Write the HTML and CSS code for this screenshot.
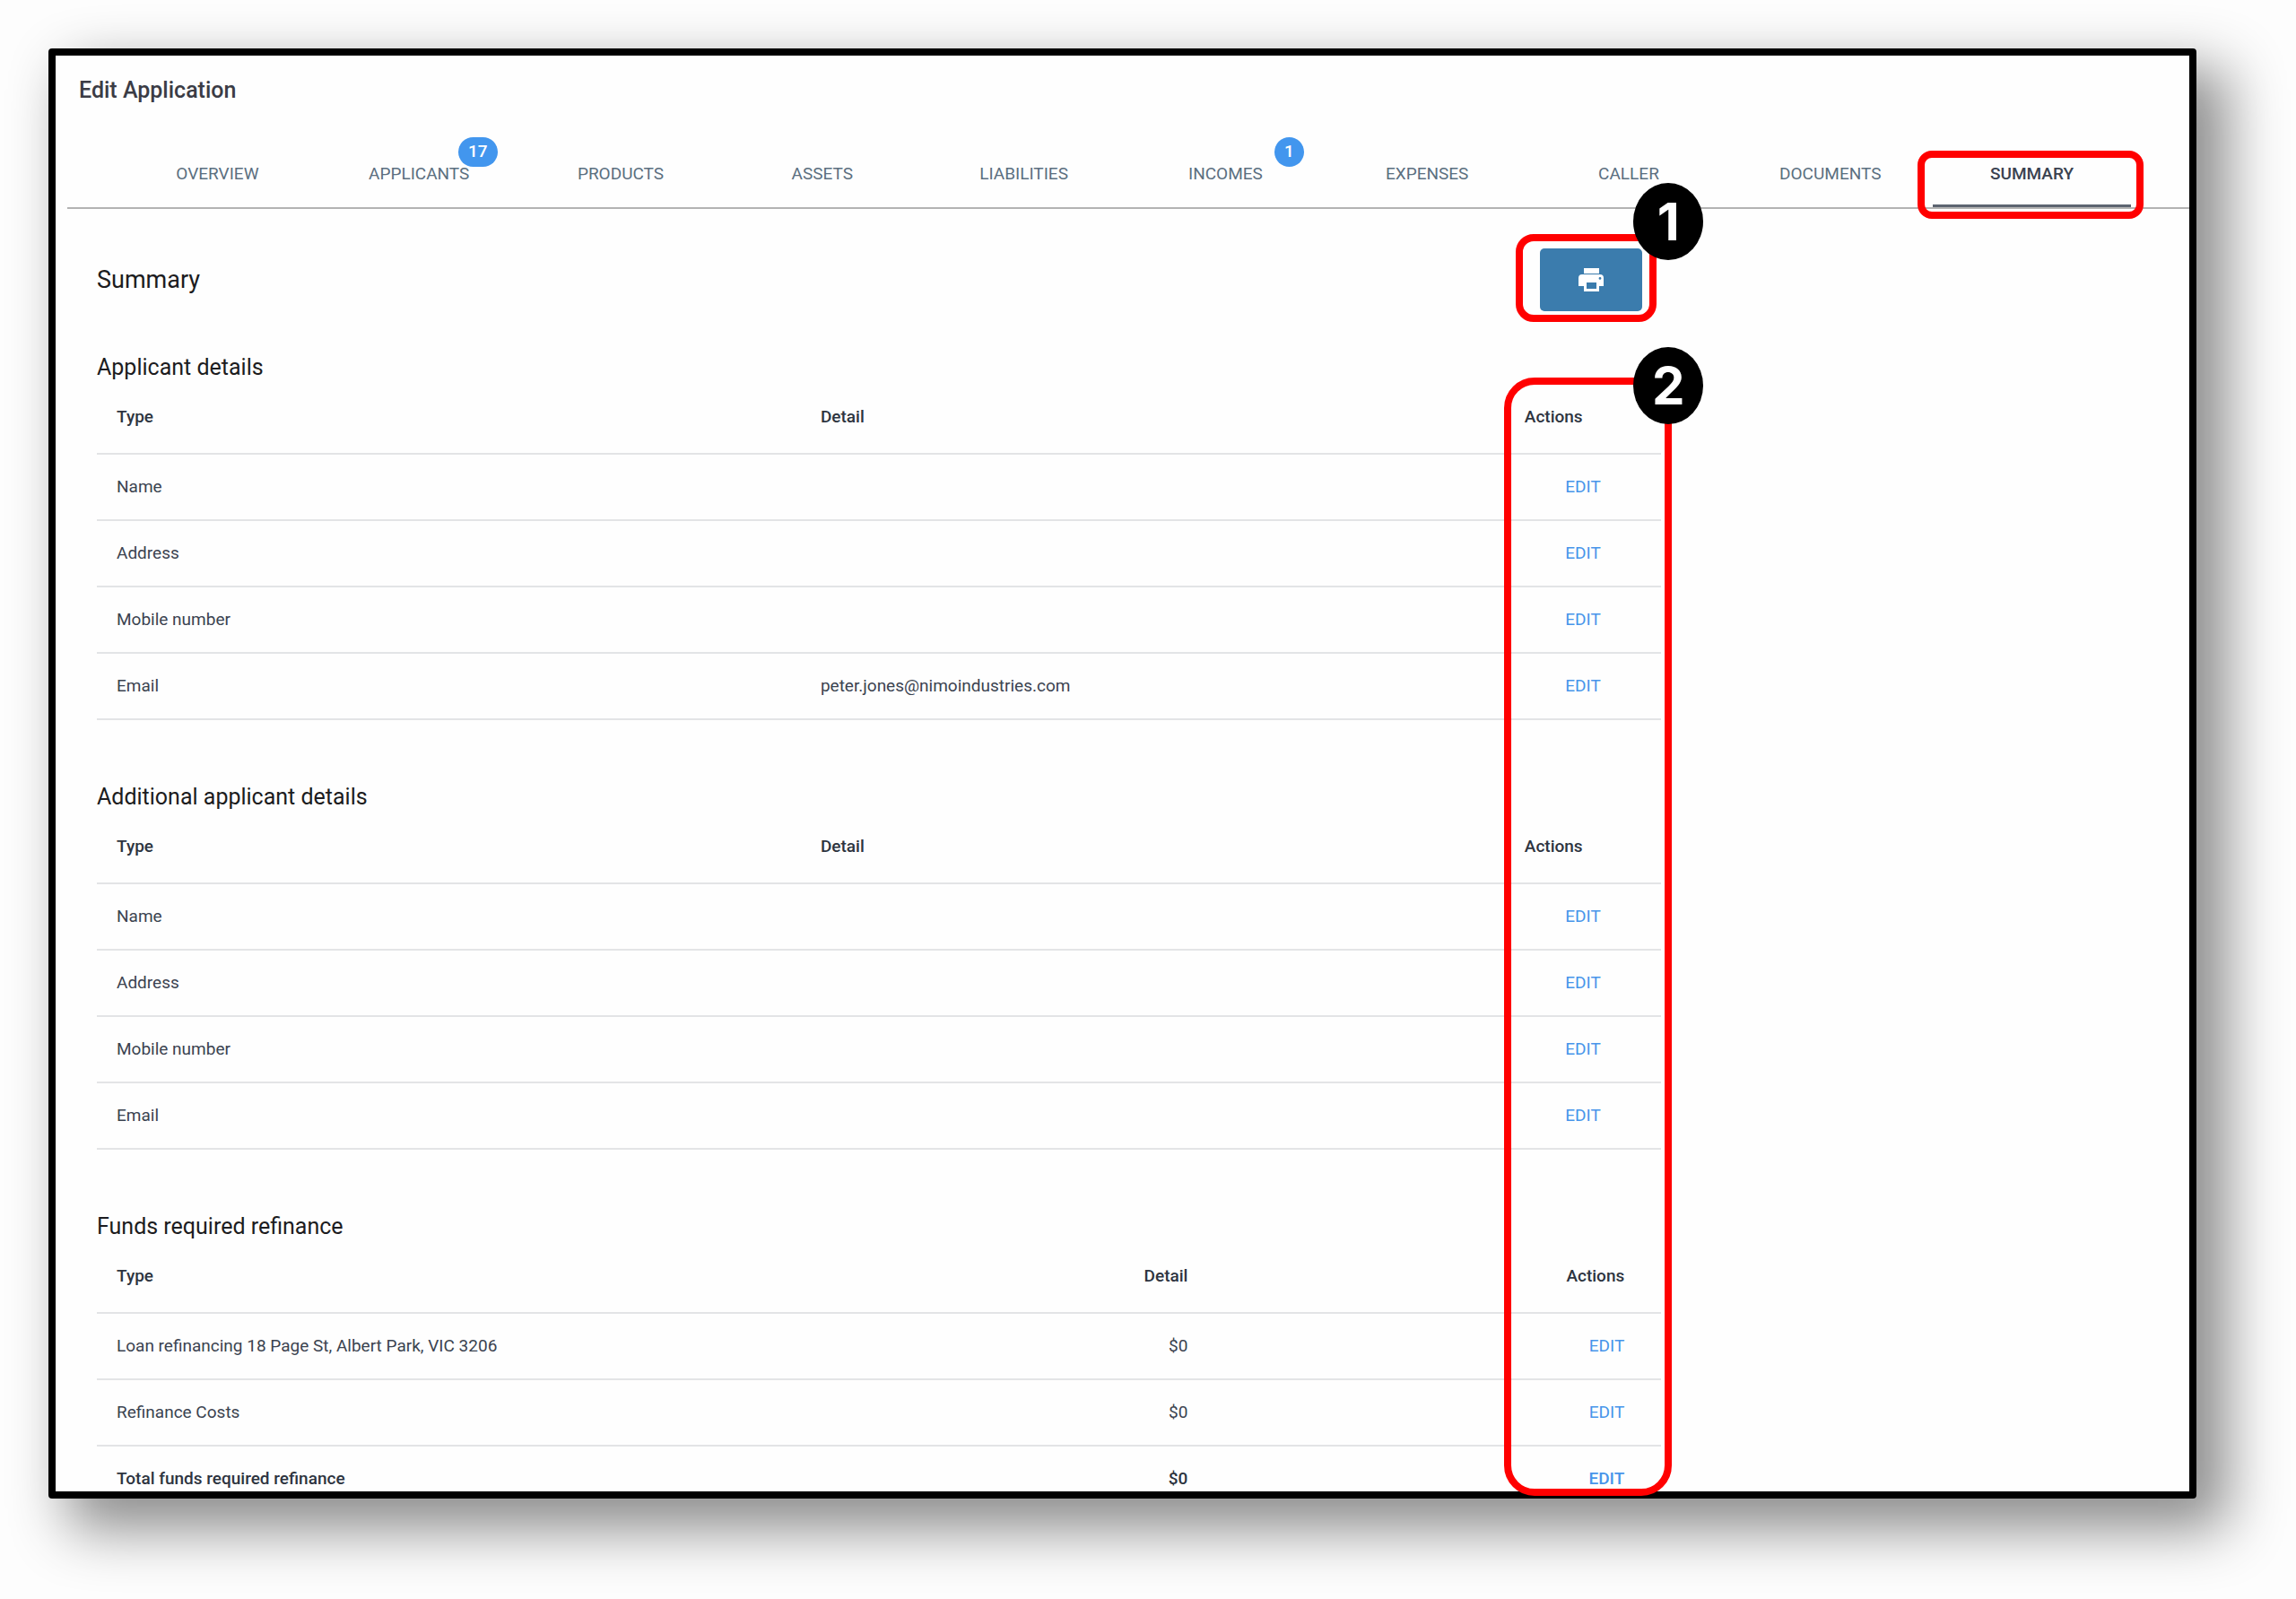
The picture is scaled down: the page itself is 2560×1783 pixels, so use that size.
FILE: index.html
```html
<!DOCTYPE html>
<html lang="en">
<head>
  <meta charset="UTF-8">
  <meta name="viewport" content="width=device-width, initial-scale=1.0">
  <title>Edit Application</title>
  <link rel="stylesheet" href="styles.css">
</head>
<body>
  <div class="frame">
    <h1 class="title">Edit Application</h1>

    <nav class="tabs">
      <a class="tab" href="#overview">OVERVIEW</a>
      <a class="tab" href="#applicants">APPLICANTS<span class="badge">17</span></a>
      <a class="tab" href="#products">PRODUCTS</a>
      <a class="tab" href="#assets">ASSETS</a>
      <a class="tab" href="#liabilities">LIABILITIES</a>
      <a class="tab" href="#incomes">INCOMES<span class="badge">1</span></a>
      <a class="tab" href="#expenses">EXPENSES</a>
      <a class="tab" href="#caller">CALLER</a>
      <a class="tab" href="#documents">DOCUMENTS</a>
      <a class="tab active" href="#summary">SUMMARY<span class="callout callout-tab"></span></a>
    </nav>

    <main class="content" id="summary">
      <div class="summary-header">
        <h2 class="summary-title">Summary</h2>
        <div class="print">
          <button class="print-button" type="button" aria-label="Print">
            <svg class="print-icon" viewBox="0 0 30 28" aria-hidden="true">
              <path fill="#fff" d="M7 1h17v6H7z"/>
              <path fill="#fff" fill-rule="evenodd" d="M5 8h20a4 4 0 0 1 4 4v9h-5v6H7v-6H1v-9a4 4 0 0 1 4-4zM10 17v7h11v-7zM25 11a1.400 1.400 0 1 0 0 2.800 1.400 1.400 0 0 0 0-2.800z"/>
            </svg>
          </button>
          <span class="callout callout-print"></span>
          <span class="step step-print">1</span>
        </div>
      </div>

      <div class="sections">
        <section class="section">
          <h3 class="section-title">Applicant details</h3>
          <table class="details">
            <thead>
              <tr><th class="col-type">Type</th><th class="col-detail">Detail</th><th class="col-actions">Actions</th></tr>
            </thead>
            <tbody>
              <tr><td>Name</td><td></td><td class="action"><a href="#applicants">EDIT</a></td></tr>
              <tr><td>Address</td><td></td><td class="action"><a href="#applicants">EDIT</a></td></tr>
              <tr><td>Mobile number</td><td></td><td class="action"><a href="#applicants">EDIT</a></td></tr>
              <tr><td>Email</td><td>peter.jones@nimoindustries.com</td><td class="action"><a href="#applicants">EDIT</a></td></tr>
            </tbody>
          </table>
        </section>

        <section class="section">
          <h3 class="section-title">Additional applicant details</h3>
          <table class="details">
            <thead>
              <tr><th class="col-type">Type</th><th class="col-detail">Detail</th><th class="col-actions">Actions</th></tr>
            </thead>
            <tbody>
              <tr><td>Name</td><td></td><td class="action"><a href="#applicants">EDIT</a></td></tr>
              <tr><td>Address</td><td></td><td class="action"><a href="#applicants">EDIT</a></td></tr>
              <tr><td>Mobile number</td><td></td><td class="action"><a href="#applicants">EDIT</a></td></tr>
              <tr><td>Email</td><td></td><td class="action"><a href="#applicants">EDIT</a></td></tr>
            </tbody>
          </table>
        </section>

        <section class="section">
          <h3 class="section-title">Funds required refinance</h3>
          <table class="details funds">
            <thead>
              <tr><th class="col-name">Type</th><th class="col-amount">Detail</th><th class="col-edit">Actions</th></tr>
            </thead>
            <tbody>
              <tr><td>Loan refinancing 18 Page St, Albert Park, VIC 3206</td><td>$0</td><td><a href="#liabilities">EDIT</a></td></tr>
              <tr><td>Refinance Costs</td><td>$0</td><td><a href="#liabilities">EDIT</a></td></tr>
            </tbody>
            <tfoot>
              <tr><td>Total funds required refinance</td><td>$0</td><td><a href="#liabilities">EDIT</a></td></tr>
            </tfoot>
          </table>
        </section>

        <span class="callout callout-actions"></span>
        <span class="step step-actions">2</span>
      </div>
    </main>
  </div>
</body>
</html>
```

FILE: styles.css
```css
* {
  box-sizing: border-box;
}
body {
  margin: 0;
  padding: 54px 111px 111px 54px;
  background: #fdfdfd;
  color: #3b4350;
  font-family: Roboto, sans-serif;
  font-size: 19px;
  line-height: 24px;
}
h1, h2, h3 {
  margin: 0;
}
a {
  text-decoration: none;
}
.frame {
  border: 8px solid #000;
  border-radius: 4px;
  background: #fefefe;
  box-shadow: 28px 28px 64px 6px rgba(0, 0, 0, 0.45);
}
.title {
  padding: 24px 26px 0;
  font-size: 25px;
  line-height: 30px;
  font-weight: 500;
  color: #3b3c45;
}

/* tabs */
.tabs {
  display: flex;
  margin: 40px 0 0 13px;
  padding: 0 63px 0 55px;
  border-bottom: 2px solid #b3b3b3;
}
.tab {
  position: relative;
  flex: 1 1 0;
  margin: 0 2px;
  padding: 26px 0 22px;
  border-bottom: 3px solid transparent;
  text-align: center;
  color: #5b6f80;
}
.tab.active {
  border-bottom-color: #5c6470;
  color: #3a4250;
  font-weight: 500;
}
.badge {
  position: absolute;
  top: -3px;
  right: 23px;
  min-width: 33px;
  padding: 0 11px 2px;
  border-radius: 17px;
  background: #4296ee;
  color: #fff;
  font-weight: 500;
  line-height: 31px;
}

/* summary */
.content {
  width: calc(75% + 6px);
  padding: 44px 0 0 46px;
}
.summary-header {
  display: flex;
  justify-content: space-between;
  align-items: center;
  padding-right: 21px;
}
.summary-title {
  font-size: 27px;
  line-height: 32px;
  font-weight: 400;
  color: #1c1c20;
}
.print {
  position: relative;
}
.print-button {
  display: flex;
  align-items: center;
  justify-content: center;
  width: 114px;
  height: 70px;
  border: 0;
  border-radius: 5px;
  background: #3b7cad;
}
.print-icon {
  width: 30px;
  height: 28px;
}
.sections {
  position: relative;
  display: flex;
  flex-direction: column;
  gap: 70px;
  padding-top: 47px;
}
.section-title {
  font-size: 25px;
  line-height: 32px;
  font-weight: 400;
  color: #1c1c20;
}

/* tables */
.details {
  width: 100%;
  table-layout: fixed;
  border-spacing: 0;
}
.details th,
.details td {
  padding: 24px 22px;
  border-bottom: 2px solid #e3e4e6;
  text-align: left;
}
.details th {
  padding: 27px 22px 28px;
  font-weight: 500;
  color: #2d3440;
}
.details a {
  color: #4795ea;
}
.details .action {
  text-align: center;
}
.col-type,
.col-detail {
  width: 45%;
}
.col-actions {
  width: 10%;
}
.col-name {
  width: 45%;
}
.col-amount {
  width: 26%;
}
.col-edit {
  width: 29%;
}
.funds th + th,
.funds td + td {
  text-align: right;
}
.funds th:last-child,
.funds td:last-child {
  padding-right: 41px;
}
.funds tfoot td {
  padding-bottom: 2px;
  border-bottom: 0;
  font-weight: 500;
  color: #2d3440;
}

/* callouts over the page */
.callout {
  position: absolute;
  border: 8px solid #ff0000;
  pointer-events: none;
}
.callout-tab {
  inset: 12px -14px -16px -17px;
  border-radius: 16px;
}
.callout-print {
  inset: -16px -16px -12px -27px;
  border-radius: 20px;
}
.callout-actions {
  top: 74px;
  right: -12px;
  bottom: -5px;
  width: 187px;
  border-radius: 34px;
}
.step {
  position: absolute;
  width: 78px;
  height: 86px;
  border-radius: 50%;
  background: #000;
  color: #fff;
  font-family: Inter, sans-serif;
  font-size: 58px;
  font-weight: 700;
  line-height: 86px;
  text-align: center;
}
.step-print {
  top: -73px;
  right: -68px;
}
.step-actions {
  top: 40px;
  right: -47px;
}
```
